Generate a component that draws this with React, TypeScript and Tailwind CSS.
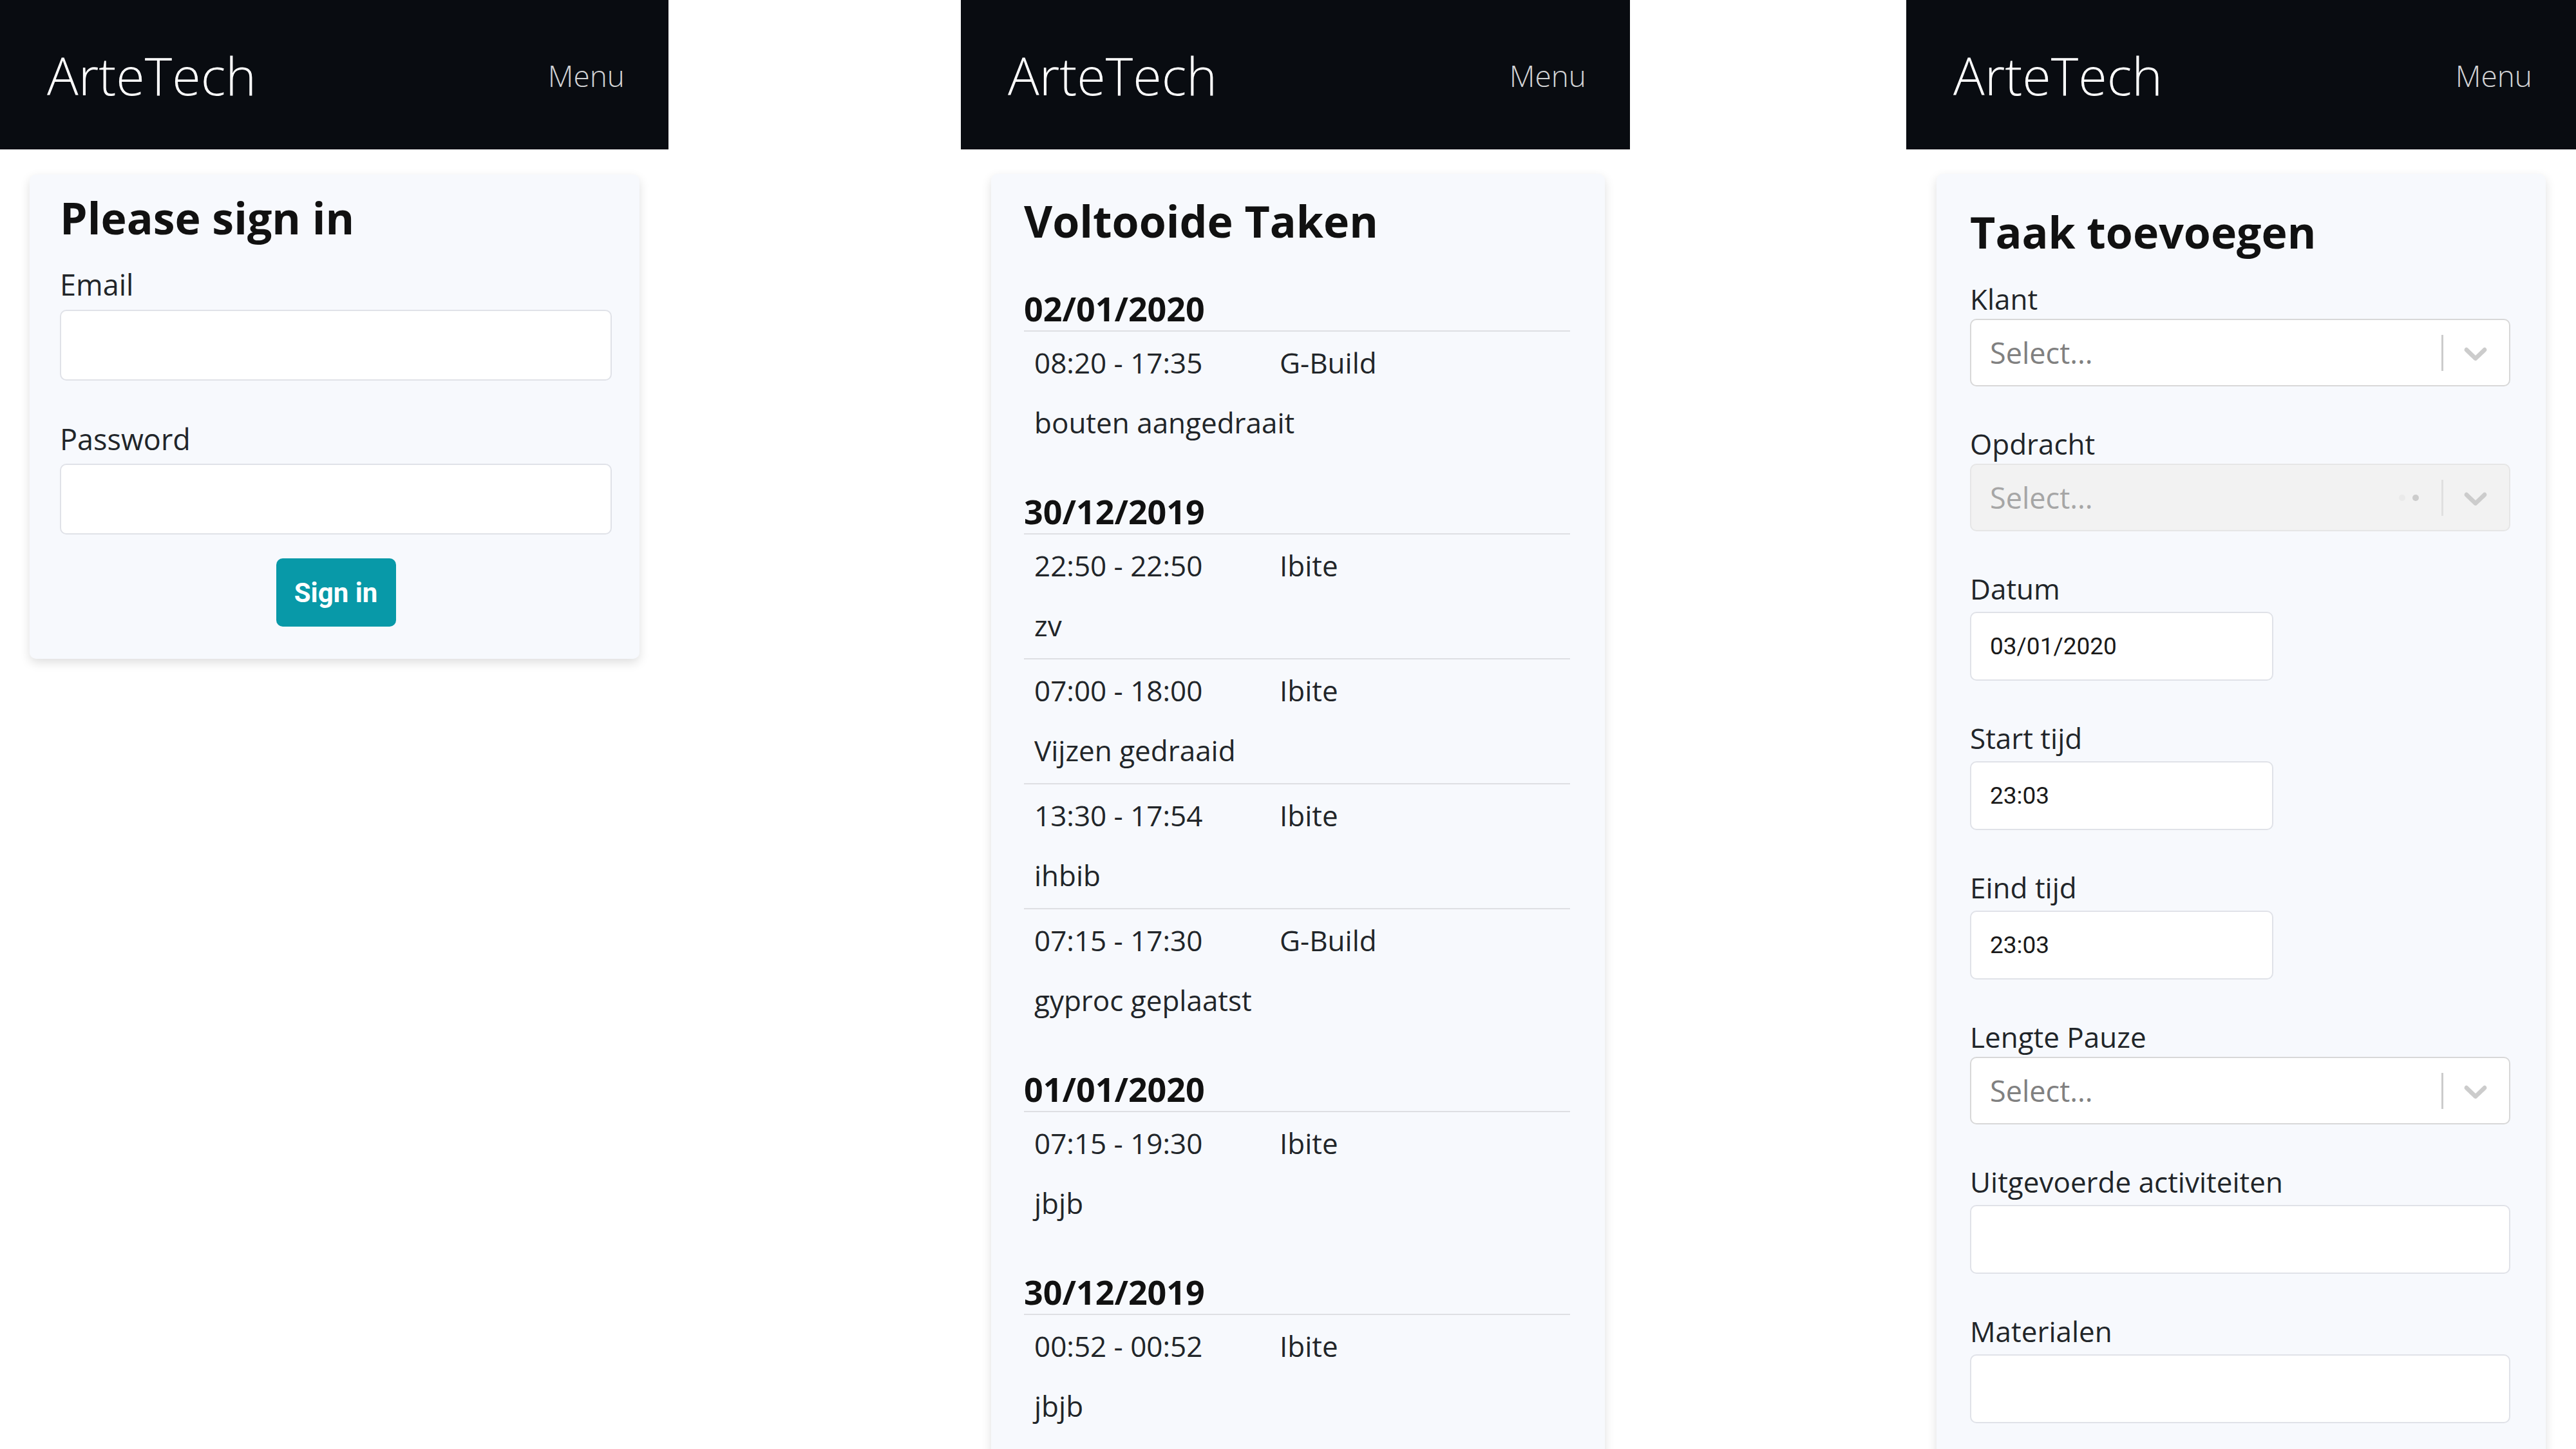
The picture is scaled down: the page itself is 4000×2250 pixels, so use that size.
import type { ReactNode } from "react";

type Task = { time: string; client: string; desc: string };
type Group = { date: string; items: Task[] };

const GROUPS: Group[] = [
  {
    date: "02/01/2020",
    items: [{ time: "08:20 - 17:35", client: "G-Build", desc: "bouten aangedraait" }],
  },
  {
    date: "30/12/2019",
    items: [
      { time: "22:50 - 22:50", client: "Ibite", desc: "zv" },
      { time: "07:00 - 18:00", client: "Ibite", desc: "Vijzen gedraaid" },
      { time: "13:30 - 17:54", client: "Ibite", desc: "ihbib" },
      { time: "07:15 - 17:30", client: "G-Build", desc: "gyproc geplaatst" },
    ],
  },
  {
    date: "01/01/2020",
    items: [{ time: "07:15 - 19:30", client: "Ibite", desc: "jbjb" }],
  },
  {
    date: "30/12/2019",
    items: [{ time: "00:52 - 00:52", client: "Ibite", desc: "jbjb" }],
  },
];

function Navbar() {
  return (
    <div className="flex h-[232px] items-center justify-between bg-[#090c11] pl-[73px] pr-[68px]">
      <span className="text-[81px] font-light leading-none text-white">ArteTech</span>
      <span className="pt-[2px] text-[46px] font-light leading-none text-[#d2d3d5]">Menu</span>
    </div>
  );
}

function Chevron() {
  return (
    <svg viewBox="0 0 20 20" className="mr-[22px] ml-[20px] h-[60px] w-[60px] fill-[#cccccc]">
      <path d="M4.516 7.548c0.436-0.446 1.043-0.481 1.576 0l3.908 3.747 3.908-3.747c0.533-0.481 1.141-0.446 1.574 0 0.436 0.445 0.408 1.197 0 1.615-0.406 0.418-4.695 4.502-4.695 4.502-0.217 0.223-0.502 0.335-0.787 0.335s-0.57-0.112-0.789-0.335c0 0-4.287-4.084-4.695-4.502s-0.436-1.17 0-1.615z" />
    </svg>
  );
}

function SelectBox({ disabled = false }: { disabled?: boolean }) {
  return (
    <div
      className={`mt-[2px] flex h-[105px] items-center rounded-[10px] border-2 ${
        disabled ? "border-[#e6e6e6] bg-[#f2f2f2]" : "border-[#d8d8d8] bg-white"
      }`}
    >
      <span
        className={`flex-1 pl-[29px] text-[45px] ${disabled ? "text-[#a6a6a6]" : "text-[#808080]"}`}
      >
        Select...
      </span>
      {disabled && (
        <div className="mr-[35px] flex items-center gap-[11px]">
          <span className="h-[10px] w-[10px] rounded-full bg-[#cccccc] opacity-0" />
          <span className="h-[10px] w-[10px] rounded-full bg-[#cccccc] opacity-20" />
          <span className="h-[10px] w-[10px] rounded-full bg-[#cccccc]" />
        </div>
      )}
      <span className={`h-[56px] w-[3px] ${disabled ? "bg-[#e0e0e0]" : "bg-[#cccccc]"}`} />
      <Chevron />
    </div>
  );
}

function TextInput({ value, narrow = false }: { value?: string; narrow?: boolean }) {
  return (
    <div
      className={`mt-[7px] flex h-[107px] items-center rounded-[10px] border-2 border-[#e0e2e8] bg-white pl-[29px] font-['Roboto',sans-serif] text-[37px] text-[#1a1a1a] ${
        narrow ? "w-[471px]" : "w-full"
      }`}
    >
      {value}
    </div>
  );
}

function Field({ label, children }: { label: string; children: ReactNode }) {
  return (
    <div className="mb-[60px]">
      <div className="text-[44px] leading-[58px] text-[#212529]">{label}</div>
      {children}
    </div>
  );
}

function Screen({ className, children }: { className: string; children: ReactNode }) {
  return <div className={`shrink-0 ${className}`}>{children}</div>;
}

function SignIn() {
  return (
    <div className="mt-[39px] ml-[46px] w-[947px] rounded-[10px] bg-[#f7f9fd] pt-[22px] pr-[43px] pb-[50px] pl-[47px] shadow-[0_6px_16px_rgba(0,0,0,0.13)]">
      <h1 className="mb-[30px] text-[68px] leading-[89px] font-bold text-[#111]">Please sign in</h1>
      <div className="text-[45px] leading-[60px] text-[#212529]">Email</div>
      <div className="mt-[9px] h-[110px] rounded-[10px] border-2 border-[#e0e2e8] bg-white" />
      <div className="mt-[61px] text-[45px] leading-[60px] text-[#212529]">Password</div>
      <div className="mt-[8px] h-[110px] rounded-[10px] border-2 border-[#e0e2e8] bg-white" />
      <div className="mt-[37px] flex justify-center">
        <button className="h-[106px] w-[186px] rounded-[10px] bg-[#0899a8] font-['Roboto',sans-serif] text-[42px] font-bold text-white">
          Sign in
        </button>
      </div>
    </div>
  );
}

function DoneTasks() {
  return (
    <div className="mt-[38px] ml-[47px] w-[953px] rounded-[10px] bg-[#f7f9fd] pt-[31px] pr-[54px] pb-[200px] pl-[51px] shadow-[0_6px_16px_rgba(0,0,0,0.13)]">
      <h1 className="mb-[63px] text-[68px] leading-[84px] font-bold text-[#111]">Voltooide Taken</h1>
      {GROUPS.map((group, gi) => (
        <div key={gi} className="mb-[56px]">
          <div className="border-b-2 border-[#dedfe3] pb-[3px] text-[52px] leading-[62px] font-bold text-[#111]">
            {group.date}
          </div>
          {group.items.map((task, ti) => (
            <div
              key={ti}
              className={`pt-[18px] pb-[21px] pl-[16px] text-[44px] leading-[60px] text-[#212529] ${
                ti > 0 ? "border-t-2 border-[#dedfe3]" : ""
              }`}
            >
              <div className="grid grid-cols-[381px_1fr]">
                <span>{task.time}</span>
                <span>{task.client}</span>
              </div>
              <div className="mt-[33px]">{task.desc}</div>
            </div>
          ))}
        </div>
      ))}
    </div>
  );
}

function AddTask() {
  return (
    <div className="mt-[38px] ml-[47px] w-[946px] rounded-[10px] bg-[#f7f9fd] pt-[46px] pr-[55px] pb-[200px] pl-[52px] shadow-[0_6px_16px_rgba(0,0,0,0.13)]">
      <h1 className="mb-[32px] text-[68px] leading-[87px] font-bold text-[#111]">Taak toevoegen</h1>
      <Field label="Klant">
        <SelectBox />
      </Field>
      <Field label="Opdracht">
        <SelectBox disabled />
      </Field>
      <Field label="Datum">
        <TextInput value="03/01/2020" narrow />
      </Field>
      <Field label="Start tijd">
        <TextInput value="23:03" narrow />
      </Field>
      <Field label="Eind tijd">
        <TextInput value="23:03" narrow />
      </Field>
      <Field label="Lengte Pauze">
        <SelectBox />
      </Field>
      <Field label="Uitgevoerde activiteiten">
        <TextInput />
      </Field>
      <Field label="Materialen">
        <TextInput />
      </Field>
    </div>
  );
}

export default function App() {
  return (
    <div className="flex h-[2250px] w-[4000px] items-start overflow-hidden bg-white font-['Open_Sans',sans-serif]">
      <Screen className="w-[1038px]">
        <Navbar />
        <SignIn />
      </Screen>
      <Screen className="ml-[454px] w-[1039px]">
        <Navbar />
        <DoneTasks />
      </Screen>
      <Screen className="ml-[429px] w-[1040px]">
        <Navbar />
        <AddTask />
      </Screen>
    </div>
  );
}
